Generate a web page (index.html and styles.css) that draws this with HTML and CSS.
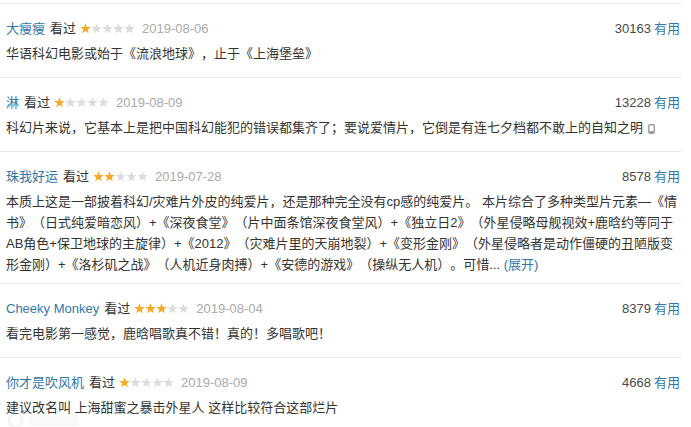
FILE: index.html
```html
<!DOCTYPE html>
<html lang="zh-CN">
<head>
<meta charset="utf-8">
<title>短评</title>
<link rel="stylesheet" href="styles.css">
</head>
<body>
<svg class="defs" width="0" height="0" aria-hidden="true">
  <defs>
    <polygon id="star" points="5.5,0.3 6.85,3.9 10.7,4.05 7.7,6.45 8.75,10.2 5.5,8.05 2.25,10.2 3.3,6.45 0.3,4.05 4.15,3.9"/>
  </defs>
</svg>
<div class="list">
  <div class="item">
    <div class="info">
      <div class="meta">
        <a class="name">大瘦瘦</a><span class="watched">看过</span>
        <svg class="stars" viewBox="0 0 55 11" width="55" height="11"><use href="#star" x="0" class="on"/><use href="#star" x="11" class="off"/><use href="#star" x="22" class="off"/><use href="#star" x="33" class="off"/><use href="#star" x="44" class="off"/></svg>
        <span class="time">2019-08-06</span>
      </div>
      <div class="votes"><span class="count">30163</span><a class="useful">有用</a></div>
    </div>
    <p class="content">华语科幻电影或始于《流浪地球》，止于《上海堡垒》</p>
  </div>

  <div class="item">
    <div class="info">
      <div class="meta">
        <a class="name">淋</a><span class="watched">看过</span>
        <svg class="stars" viewBox="0 0 55 11" width="55" height="11"><use href="#star" x="0" class="on"/><use href="#star" x="11" class="off"/><use href="#star" x="22" class="off"/><use href="#star" x="33" class="off"/><use href="#star" x="44" class="off"/></svg>
        <span class="time">2019-08-09</span>
      </div>
      <div class="votes"><span class="count">13228</span><a class="useful">有用</a></div>
    </div>
    <p class="content">科幻片来说，它基本上是把中国科幻能犯的错误都集齐了；要说爱情片，它倒是有连七夕档都不敢上的自知之明<svg class="phone" viewBox="0 0 7 10" width="7" height="10"><rect x="0.75" y="0.75" width="5.5" height="8.5" rx="1.2" fill="none" stroke="#9a9a9a" stroke-width="1.3"/><rect x="1" y="7.2" width="5" height="2" fill="#9a9a9a"/></svg></p>
  </div>

  <div class="item long">
    <div class="info">
      <div class="meta">
        <a class="name">珠我好运</a><span class="watched">看过</span>
        <svg class="stars" viewBox="0 0 55 11" width="55" height="11"><use href="#star" x="0" class="on"/><use href="#star" x="11" class="on"/><use href="#star" x="22" class="off"/><use href="#star" x="33" class="off"/><use href="#star" x="44" class="off"/></svg>
        <span class="time">2019-07-28</span>
      </div>
      <div class="votes"><span class="count">8578</span><a class="useful">有用</a></div>
    </div>
    <p class="content">本质上这是一部披着科幻/灾难片外皮的纯爱片，还是那种完全没有cp感的纯爱片。 本片综合了多种类型片元素—《情书》（日式纯爱暗恋风）+《深夜食堂》（片中面条馆深夜食堂风）+《独立日2》（外星侵略母舰视效+鹿晗约等同于AB角色+保卫地球的主旋律）+《2012》（灾难片里的天崩地裂）+《变形金刚》（外星侵略者是动作僵硬的丑陋版变形金刚）+《洛杉矶之战》（人机近身肉搏）+《安德的游戏》（操纵无人机）。可惜... <a class="more">(展开)</a></p>
  </div>

  <div class="item">
    <div class="info">
      <div class="meta">
        <a class="name">Cheeky Monkey</a><span class="watched">看过</span>
        <svg class="stars" viewBox="0 0 55 11" width="55" height="11"><use href="#star" x="0" class="on"/><use href="#star" x="11" class="on"/><use href="#star" x="22" class="on"/><use href="#star" x="33" class="off"/><use href="#star" x="44" class="off"/></svg>
        <span class="time">2019-08-04</span>
      </div>
      <div class="votes"><span class="count">8379</span><a class="useful">有用</a></div>
    </div>
    <p class="content">看完电影第一感觉，鹿晗唱歌真不错！真的！多唱歌吧！</p>
  </div>

  <div class="item">
    <div class="info">
      <div class="meta">
        <a class="name">你才是吹风机</a><span class="watched">看过</span>
        <svg class="stars" viewBox="0 0 55 11" width="55" height="11"><use href="#star" x="0" class="on"/><use href="#star" x="11" class="off"/><use href="#star" x="22" class="off"/><use href="#star" x="33" class="off"/><use href="#star" x="44" class="off"/></svg>
        <span class="time">2019-08-09</span>
      </div>
      <div class="votes"><span class="count">4668</span><a class="useful">有用</a></div>
    </div>
    <p class="content">建议改名叫 上海甜蜜之暴击外星人 这样比较符合这部烂片</p>
  </div>
</div>
<div class="watermark" aria-hidden="true"><span class="wm-logo"></span><span class="wm-bar"></span></div>
</body>
</html>
```

FILE: styles.css
```css
html, body {
  margin: 0;
  padding: 0;
  background: #fff;
}

body {
  font-family: "Liberation Sans", "Noto Sans CJK SC", sans-serif;
  font-size: 13px;
  color: #333;
  position: relative;
  height: 427px;
  overflow: hidden;
  text-spacing-trim: space-all;
}

.defs {
  position: absolute;
}

.list {
  width: 681px;
  padding-top: 3px;
}

.item {
  border-top: 1px solid #e6e6e6;
  padding: 13px 1px 13px 6px;
}

.item.long {
  padding-bottom: 8px;
}

.info {
  display: flex;
  justify-content: space-between;
  align-items: center;
  height: 24px;
  line-height: 24px;
}

.meta {
  display: flex;
  align-items: center;
}

.name {
  color: #3377aa;
  margin-right: 5px;
}

.watched {
  color: #333;
  margin-right: 4px;
}

.stars {
  display: block;
  margin-right: 7px;
  margin-top: -1px;
}

.stars .on {
  fill: #f9a825;
}

.stars .off {
  fill: #dcdcdc;
}

.time {
  color: #aaa;
}

.votes {
  display: flex;
  align-items: center;
}

.count {
  color: #494949;
  margin-right: 3px;
}

.useful {
  color: #3377aa;
}

.content {
  margin: 2px 0 0;
  line-height: 21px;
  color: #333;
}

.more {
  color: #3377aa;
}

.phone {
  margin-left: 5px;
  vertical-align: -2px;
}

.watermark {
  position: absolute;
  left: 8px;
  top: 413px;
  display: flex;
  align-items: center;
  opacity: 0.35;
}

.wm-logo {
  width: 11px;
  height: 11px;
  border: 2px solid #ddd;
  border-radius: 50%;
  margin-right: 6px;
}

.wm-bar {
  width: 50px;
  height: 11px;
  border-radius: 2px;
  background: #eee;
}
```
